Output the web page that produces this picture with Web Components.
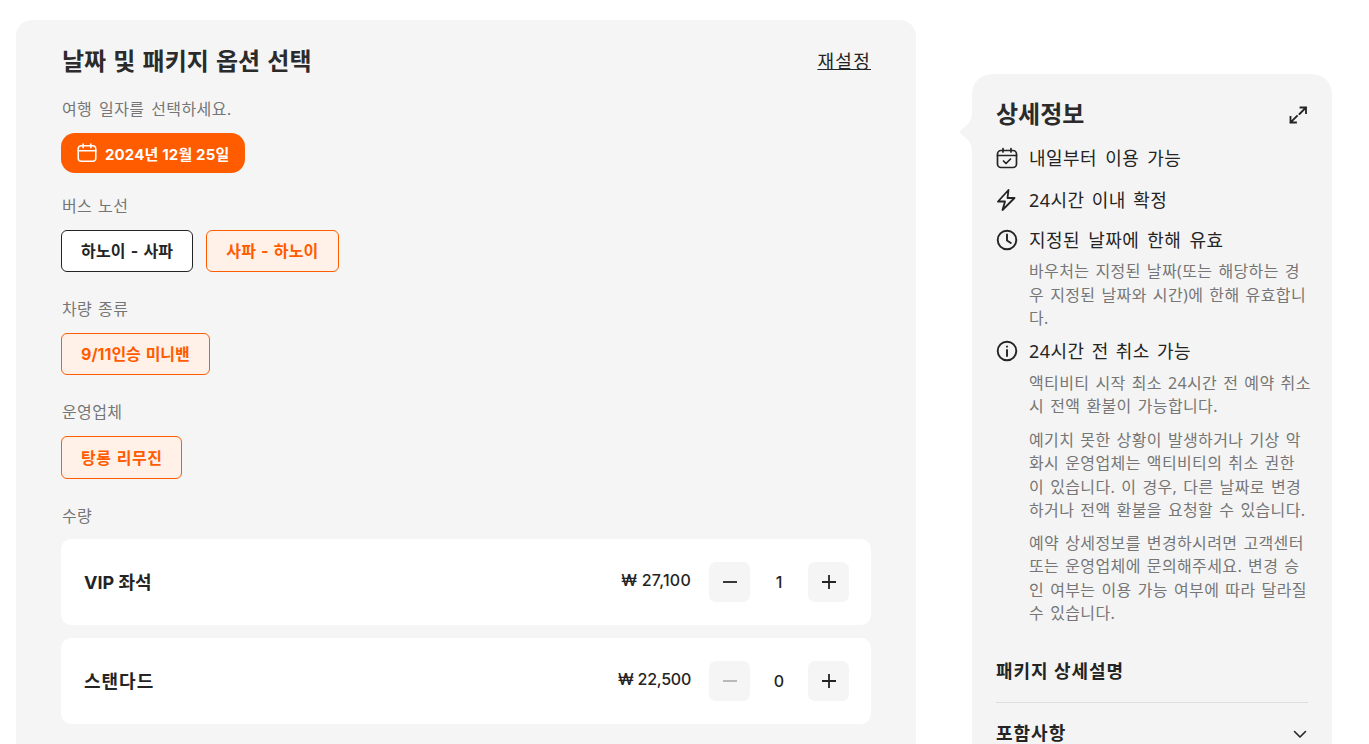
<!DOCTYPE html>
<html lang="ko"><head><meta charset="utf-8"><style>
html,body{margin:0;height:744px;overflow:hidden;background:#fff}
body{font-family:Inter,"Noto Sans CJK KR",sans-serif;color:#242424}
#page{display:flex;align-items:flex-start;gap:56px;padding-left:16px}
</style></head><body>
<div id="page">
<option-panel></option-panel>
<detail-panel></detail-panel>
</div>
<script>
const I={
cal:'<svg width="22" height="22" viewBox="0 0 20 20" fill="none" stroke="currentColor" stroke-width="1.400" stroke-linecap="round"><rect x="2" y="3.500" width="16" height="14" rx="3"/><path d="M2 8h16M6.500 1.800v3.400M13.500 1.800v3.400"/></svg>',
calc:'<svg width="22" height="22" viewBox="0 0 22 22" fill="none" stroke="currentColor" stroke-width="1.700" stroke-linecap="round" stroke-linejoin="round"><rect x="1.500" y="3.500" width="19" height="17" rx="3.500"/><path d="M1.500 8.500h19M7 1.500v3.500M15 1.500v3.500M7.500 14l2.500 2.500 4.500-4.500"/></svg>',
bolt:'<svg width="22" height="22" viewBox="0 0 22 22" fill="none" stroke="currentColor" stroke-width="1.800" stroke-linejoin="round"><path d="M12.500 1 2 12.500h7L6.500 21 18.500 9H11.500z"/></svg>',
clock:'<svg width="22" height="22" viewBox="0 0 22 22" fill="none" stroke="currentColor" stroke-width="1.900" stroke-linecap="round" stroke-linejoin="round"><circle cx="11" cy="11" r="9.300"/><path d="M11 5.500V11.500l3.800 2.500"/></svg>',
info:'<svg width="22" height="22" viewBox="0 0 22 22" fill="none" stroke="currentColor" stroke-width="1.900" stroke-linecap="round"><circle cx="11" cy="11" r="9.300"/><path d="M11 10v6M11 6.500v.3"/></svg>',
exp:'<svg width="20" height="20" viewBox="0 0 20 20" fill="none" stroke="currentColor" stroke-width="1.800" stroke-linecap="square"><path d="M12.500 2.500H18V8M18 2.500 11.500 9M2.500 12V17.500H8M2.500 17.500 9 11"/></svg>',
chev:'<svg width="16" height="16" viewBox="0 0 16 16" fill="none" stroke="currentColor" stroke-width="1.600" stroke-linecap="round" stroke-linejoin="round"><path d="M2.500 5.500 8 11l5.500-5.500"/></svg>'
};
function def(name,css,html){customElements.define(name,class extends HTMLElement{connectedCallback(){if(this.shadowRoot)return;const r=this.attachShadow({mode:'open'});r.innerHTML='<style>'+css+'</style>'+(typeof html==='function'?html(this):html);}});}
def('chip-btn',`:host{display:inline-flex;align-items:center;height:42px;padding:0 19px;box-sizing:border-box;border:1px solid #242424;border-radius:6px;background:#fff;font-size:16px;font-weight:700;color:#242424;line-height:1;letter-spacing:.2px;word-spacing:1px}
:host([on]){border-color:#ff5c00;background:#fff1e8;color:#ff5c00}`,'<slot></slot>');
def('qty-row',`:host{display:flex;align-items:center;height:86px;padding:0 22px 0 23px;background:#fff;border-radius:10px;box-sizing:border-box;margin-bottom:13px}
.n{flex:1;font-size:18px;font-weight:700;padding-bottom:3px}.p{font-size:16px;font-weight:500;margin-right:18px;padding-bottom:5px}
.b{width:41px;height:40px;border-radius:7px;background:#f5f5f5;display:flex;align-items:center;justify-content:center}
.v{width:58px;text-align:center;font-size:16px;font-weight:500}
svg{display:block}`,h=>{const z=h.getAttribute('v')==='0';return `<span class="n" style="letter-spacing:${h.getAttribute('ls')||0}px">${h.getAttribute('n')}</span><span class="p" style="letter-spacing:${h.getAttribute('pls')||0}px">${h.getAttribute('p')}</span><span class="b"><svg width="16" height="16" fill="none" stroke="${z?'#b3b3b3':'#242424'}" stroke-width="1.800"><path d="M1 8h14"/></svg></span><span class="v">${h.getAttribute('v')}</span><span class="b"><svg width="16" height="16" fill="none" stroke="#242424" stroke-width="1.800"><path d="M1 8h14M8 1v14"/></svg></span>`});
def('option-group',`:host{display:block;margin-bottom:26px}
.l{font-size:16px;line-height:22px;color:#767676;margin-bottom:13px;letter-spacing:.38px;word-spacing:1px;padding-left:1px}
.c{display:flex;gap:13px}`,h=>`<div class="l">${h.getAttribute('label')}</div><div class="c"><slot></slot></div>`);
def('option-panel',`:host{display:block;width:900px;height:760px;flex:none;box-sizing:border-box;margin-top:20px;padding:26px 45px 0 45px;background:#f5f5f5;border-radius:16px 16px 0 0}
.h{display:flex;justify-content:space-between;align-items:center;height:32px;margin-bottom:20px}
h2{margin:0;font-size:24px;font-weight:700;line-height:32px;word-spacing:1.500px;color:#2b2b2b;padding-left:1px}
u{font-size:18px;color:#242424;letter-spacing:1.300px;margin-bottom:4px}
.s{font-size:16px;line-height:22px;color:#767676;margin-bottom:13px;letter-spacing:.38px;word-spacing:2px;padding-left:1px}
.d{display:inline-flex;align-items:center;gap:7px;height:40px;padding:0 16px 0 15px;border-radius:14px;background:#ff5c00;color:#fff;font-size:15px;letter-spacing:.15px;font-weight:700;margin-bottom:22px;vertical-align:top}
.d svg{display:block}`,`<div class="h"><h2>날짜 및 패키지 옵션 선택</h2><u>재설정</u></div>
<div class="s">여행 일자를 선택하세요.</div><div class="d">${I.cal}<span>2024년 12월 25일</span></div>
<option-group label="버스 노선"><chip-btn>하노이 - 사파</chip-btn><chip-btn on>사파 - 하노이</chip-btn></option-group>
<option-group label="차량 종류"><chip-btn on style="letter-spacing:0">9/11인승 미니밴</chip-btn></option-group>
<option-group label="운영업체"><chip-btn on style="height:43px;letter-spacing:.5px">탕롱 리무진</chip-btn></option-group>
<option-group label="수량" style="margin:0"><div style="width:100%;margin-top:-1px"><qty-row n="VIP 좌석" p="₩ 27,100" pls=".25" v="1"></qty-row><qty-row n="스탠다드" ls="1" p="₩ 22,500" pls="-.25" v="0"></qty-row></div></option-group>`);
def('info-item',`:host{display:block;margin-bottom:14px;font-family:"Noto Sans","Noto Sans CJK KR",sans-serif}
.t{display:flex;align-items:center;gap:11px;font-size:18px;line-height:26px;color:#242424;letter-spacing:.45px;word-spacing:var(--ws,3px)}
svg{display:block;flex:none}
.b{margin-left:33px;font-size:16px;line-height:23.500px;color:#767676;letter-spacing:.38px;word-spacing:1.500px;white-space:nowrap}
.b.has{margin-top:var(--bt,6px);margin-bottom:-6px}
::slotted(p){margin:0 0 10px}
::slotted(p:last-child){margin:0}`,h=>`<div class="t">${I[h.getAttribute('i')]}<span>${h.getAttribute('t')}</span></div><div class="b${h.children.length?' has':''}"><slot></slot></div>`);
def('detail-panel',`:host{display:block;position:relative;width:360px;height:680px;flex:none;box-sizing:border-box;margin-top:74px;padding:25px 24px 0;background:#f4f4f4;border-radius:20px 20px 0 0}
.tail{position:absolute;left:-13px;top:38px;width:13px;height:40px}
.h{display:flex;justify-content:space-between;align-items:center;height:32px;margin-bottom:14px}
h2{margin:0;font-size:24px;line-height:32px;font-weight:700;color:#2b2b2b}
.x{display:block;height:20px}
.p{font-size:18px;font-weight:700;line-height:26px;margin-top:39px;padding-bottom:17px;border-bottom:1px solid #dedede;letter-spacing:1px}
.r{display:flex;justify-content:space-between;align-items:center;font-size:18px;font-weight:700;line-height:26px;margin-top:18px;letter-spacing:1px}
.r svg{display:block}`,`<svg class="tail" viewBox="0 0 13 40"><path d="M13 0C13 8 10 11 8 13L1 19q-1 1 0 2L8 27C10 29 13 32 13 40z" fill="#f4f4f4"/></svg>
<div class="h"><h2>상세정보</h2><span class="x">${I.exp}</span></div>
<info-item i="calc" t="내일부터 이용 가능" style="margin-bottom:16px"></info-item>
<info-item i="bolt" t="24시간 이내 확정" style="--ws:2.200px"></info-item>
<info-item i="clock" t="지정된 날짜에 한해 유효" style="--bt:7px;margin-bottom:13px"><p>바우처는 지정된 날짜(또는 해당하는 경<br>우 지정된 날짜와 시간)에 한해 유효합니<br>다.</p></info-item>
<info-item i="info" t="24시간 전 취소 가능" style="--ws:2px;--bt:8px"><p>액티비티 시작 최소 24시간 전 예약 취소<br>시 전액 환불이 가능합니다.</p><p style="margin-bottom:9px">예기치 못한 상황이 발생하거나 기상 악<br>화시 운영업체는 액티비티의 취소 권한<br>이 있습니다. 이 경우, 다른 날짜로 변경<br>하거나 전액 환불을 요청할 수 있습니다.</p><p>예약 상세정보를 변경하시려면 고객센터<br>또는 운영업체에 문의해주세요. 변경 승<br>인 여부는 이용 가능 여부에 따라 달라질<br>수 있습니다.</p></info-item>
<div class="p">패키지 상세설명</div>
<div class="r"><span>포함사항</span>${I.chev}</div>`);
</script>
</body></html>
